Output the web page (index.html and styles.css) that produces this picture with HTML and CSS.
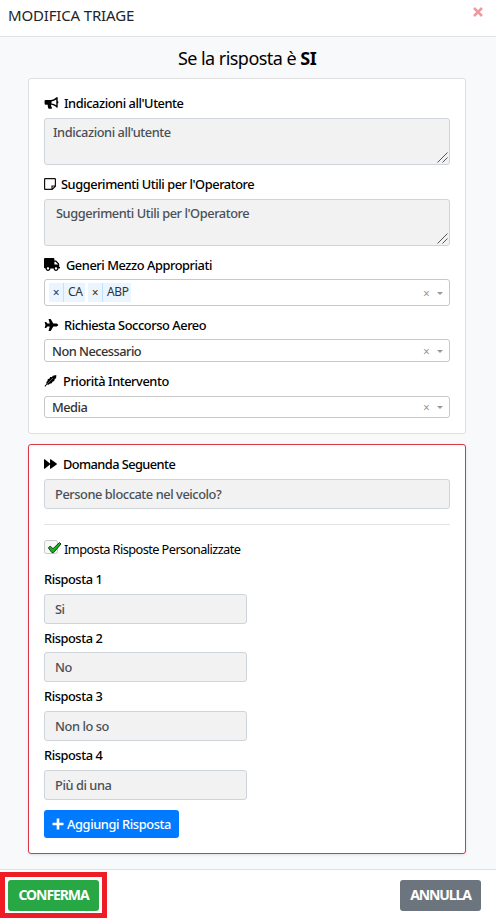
FILE: index.html
```html
<!DOCTYPE html>
<html lang="it">
<head>
<meta charset="utf-8">
<title>Modifica Triage</title>
<link rel="stylesheet" href="styles.css">
</head>
<body>
<div class="modal">
  <header class="modal-header">
    <h1 class="modal-title">MODIFICA TRIAGE</h1>
    <svg class="close" viewBox="0 0 10 10"><path d="M1 1l8 8M9 1l-8 8"/></svg>
  </header>
  <main class="modal-body">
    <h2 class="heading"><span>Se la risposta è</span> <b>SI</b></h2>
    <section class="card card-main">
      <div class="label first"><svg class="icon w15" viewBox="0 0 15 13"><path fill-rule="evenodd" d="M1 3.200h5.500C9 3.100 11 2 13 .3q1-.7 1.200.4v3.700q.8.300.8 1.300t-.8 1.300v4q-.2 1-1.200.4C11 9.700 9 8.700 7 8.500q-.2 1.700 1 3.100c.4.600-.1 1.200-.8 1.200H5.100q-.7 0-1-.6Q3.200 10.400 3.500 8.500H1.400Q0 8.400 0 7.100V4.400Q0 3.200 1 3.200zM7.500 4.800v2.200q2.800.3 5.200 1.900V2.700Q10.300 4.500 7.500 4.800z"/></svg><span>Indicazioni all'Utente</span></div>
      <div class="textarea"><span>Indicazioni all'utente</span><svg class="grip" viewBox="0 0 11 11"><path d="M.5 10.500L10.500.5M5.500 10.500l5-5"/></svg></div>
      <div class="label"><svg class="icon w12" viewBox="0 0 12 12"><path class="note" d="M1.300.6h9.400q.7 0 .7.700v6.900l-3.200 3.200H1.300q-.7 0-.7-.7V1.300q0-.7.7-.7zM11.400 8H8v3.400"/></svg><span>Suggerimenti Utili per l'Operatore</span></div>
      <div class="textarea inset"><span>Suggerimenti Utili per l'Operatore</span><svg class="grip" viewBox="0 0 11 11"><path d="M.5 10.500L10.500.5M5.500 10.500l5-5"/></svg></div>
      <div class="label short"><svg class="icon w16" viewBox="0 0 640 512"><path d="M624 352h-16V243.900c0-12.700-5.100-24.900-14.100-33.900L494 110.100c-9-9-21.200-14.100-33.900-14.100H416V48c0-26.500-21.500-48-48-48H48C21.500 0 0 21.500 0 48v320c0 26.500 21.500 48 48 48h16c0 53 43 96 96 96s96-43 96-96h128c0 53 43 96 96 96s96-43 96-96h48c8.800 0 16-7.200 16-16v-32c0-8.800-7.200-16-16-16zM160 464c-26.500 0-48-21.500-48-48s21.500-48 48-48 48 21.500 48 48-21.500 48-48 48zm320 0c-26.500 0-48-21.500-48-48s21.500-48 48-48 48 21.500 48 48-21.500 48-48 48zm80-208H416V144h44.100l99.900 99.900V256z"/></svg><span>Generi Mezzo Appropriati</span></div>
      <div class="select multi">
        <div class="tag"><i>×</i><span>CA</span></div><div class="tag tag-wide"><i>×</i><span>ABP</span></div>
        <span class="clear">×</span><span class="arrow"></span>
      </div>
      <div class="label short"><svg class="icon w15" viewBox="0 0 576 512"><path d="M480 192H365.710L260.610 8.060A16.014 16.014 0 0 0 246.710 0h-65.500c-10.630 0-18.300 10.170-15.380 20.390L214.860 192H112l-43.200-57.600c-3.020-4.030-7.770-6.400-12.800-6.400H16.010C5.600 128-2.040 137.780.490 147.880L32 256 .490 364.120C-2.040 374.220 5.600 384 16.010 384H56c5.040 0 9.780-2.370 12.800-6.400L112 320h102.860l-49.030 171.600c-2.920 10.220 4.750 20.400 15.380 20.400h65.500c5.740 0 11.040-3.080 13.890-8.060L365.710 320H480c35.350 0 96-28.650 96-64s-60.650-64-96-64z"/></svg><span>Richiesta Soccorso Aereo</span></div>
      <div class="select single"><span class="value">Non Necessario</span><span class="clear">×</span><span class="arrow"></span></div>
      <div class="label raised"><svg class="icon w13" viewBox="0 0 13 13"><path d="M12.800 0L12.600 3.300 11 4.600 10.600 6.500 8.700 7.200 7.800 9 5.600 9.500 4.500 10.500 2.700 10.300.8 12.800 0 12 2.200 9.600 2 7.500 3.200 6.500 3.600 4.200 5.300 4 6.100 2.200 8 2.100 9.200.8z"/><path class="cut" d="M3.300 9.300L9.200 3.200"/></svg><span>Priorità Intervento</span></div>
      <div class="select single last"><span class="value">Media</span><span class="clear">×</span><span class="arrow"></span></div>
    </section>
    <section class="card card-next">
      <div class="label next"><svg class="icon w13 forward" viewBox="0 0 13 10"><path d="M0 .6Q0 0 .7.200L6 4.400V.6Q6 0 6.700.200L12.700 4.600Q13 5 12.700 5.400L6.700 9.800Q6 10 6 9.400V5.600L.7 9.800Q0 10 0 9.400z"/></svg><span>Domanda Seguente</span></div>
      <div class="input full"><span>Persone bloccate nel veicolo?</span></div>
      <hr>
      <div class="check"><svg class="checkbox" viewBox="0 0 18 15"><rect x=".5" y=".5" width="13" height="13" rx="2"/><path d="M4.300 7.800L6.200 6.200 9 8.700 15.500 2.500 17 4 9.500 12.700H8z"/></svg><span>Imposta Risposte Personalizzate</span></div>
      <div class="label answer a1"><span>Risposta 1</span></div>
      <div class="input"><span>Si</span></div>
      <div class="label answer"><span>Risposta 2</span></div>
      <div class="input"><span>No</span></div>
      <div class="label answer tall"><span>Risposta 3</span></div>
      <div class="input"><span>Non lo so</span></div>
      <div class="label answer tall"><span>Risposta 4</span></div>
      <div class="input"><span>Più di una</span></div>
      <button class="btn add"><svg class="plus" viewBox="0 0 12 12"><path d="M6 .5v11M.5 6h11"/></svg><span>Aggiungi Risposta</span></button>
    </section>
  </main>
  <footer class="modal-footer">
    <div class="highlight"><button class="btn confirm"><span>CONFERMA</span></button></div>
    <button class="btn cancel"><span>ANNULLA</span></button>
  </footer>
</div>
</body>
</html>
```
FILE: styles.css
```css
* { box-sizing: border-box; }
body { margin: 0; background: #fff; color: #000; font: 500 12.8px/18px "Noto Sans", sans-serif; letter-spacing: -.43px; overflow: hidden; }
.modal { width: 496px; height: 919px; }
.modal-header { height: 37px; padding: 5px 13px 0 8px; display: flex; justify-content: space-between; border-bottom: 1px solid #dee2e6; }
.modal-title { margin: 0; font-size: 15px; line-height: 20px; font-weight: 400; color: #212529; letter-spacing: -.16px; }
.close { width: 10px; height: 10px; margin-top: 2px; }
.close path { stroke: #ee99a2; stroke-width: 2.500; fill: none; }
.modal-body { height: 832px; padding: 0 30px 0 28px; background: #f8f9fa; }
.heading { height: 41px; margin: 0; padding-top: 9px; text-align: center; font-size: 18px; line-height: 24px; font-weight: 400; letter-spacing: -.54px; }
.heading b { font-weight: 700; }
.card { background: #fff; border: 1px solid #dfdfdf; border-radius: 3px; padding: 0 15px; }
.card-main { height: 356px; }
.card-next { height: 410px; margin-top: 10px; border-color: #dc3545; box-shadow: 0 1px 3px rgba(0,0,0,.1); }
.label { height: 34px; display: flex; align-items: center; padding-top: 4px; white-space: nowrap; }
.label.first { height: 39px; padding-top: 9px; }
.label.short { height: 33px; }
.label.raised { padding-top: 3px; }
.icon { flex: none; height: 12px; margin-right: 5px; fill: #000; }
.w15 { width: 15px; }
.w12 { width: 12px; }
.w16 { width: 16px; height: 13px; margin-right: 6px; }
.w13 { width: 13px; margin-right: 6px; }
.note { fill: none; stroke: #111; stroke-width: 1.200; }
.cut { fill: none; stroke: #fff; stroke-width: .4; }
.textarea { position: relative; height: 47px; padding: 4px 8px; border: 1px solid #ced4da; border-radius: 3px; background: #f2f2f2; color: #495057; }
.inset { padding-left: 11px; }
.grip { position: absolute; right: 1px; bottom: 1px; width: 11px; height: 11px; }
.grip path { fill: none; stroke: #555; stroke-width: 1; }
.select { display: flex; align-items: center; border: 1px solid #c8c8c8; border-radius: 3px; color: #333; padding: 0 6px 0 7px; }
.value { letter-spacing: -.52px; }
.multi { height: 27px; padding-left: 4px; }
.single { height: 23px; }
.single.last { height: 22px; }
.tag { display: flex; align-items: center; height: 19px; margin-right: 3px; width: 36px; background: #ebf5ff; font-size: 12px; font-weight: 400; letter-spacing: -.3px; }
.tag-wide { width: 43px; }
.tag i { width: 15px; height: 19px; line-height: 19px; border-right: 1px solid #c2e0ff; text-align: center; font-style: normal; }
.tag span { padding-left: 4px; margin-top: -1px; }
.clear { margin: 2px 0 0 auto; width: 7px; font-size: 12px; font-weight: 400; letter-spacing: 0; color: #999; }
.arrow { border: 3px solid transparent; border-top-color: #999; border-bottom: 0; margin: 1px 0 0 7px; }
.label.next { height: 34px; padding-top: 4px; letter-spacing: -.56px; }
.forward { height: 10px; }
.input { width: 203px; height: 30px; padding: 5px 10px; border: 1px solid #ced4da; border-radius: 3px; background: #f2f2f2; color: #495057; white-space: nowrap; }
.full { width: 100%; }
hr { height: 1px; margin: 15px 0; border: 0; background: #e3e3e3; }
.check { height: 19px; display: flex; font-weight: 400; letter-spacing: -.58px; }
.checkbox { width: 18px; height: 15px; margin-right: 2px; }
.checkbox rect { fill: #f8f8f8; stroke: #c8c8c8; }
.checkbox path { fill: #18b51b; stroke: #123f12; stroke-width: 1; }
.label.answer { height: 28px; padding: 0; }
.label.answer.a1 { height: 35px; padding-top: 5px; }
.label.answer.tall { height: 29px; padding-bottom: 1px; }
.btn { border: 0; border-radius: 3px; padding: 0; color: #fff; font: inherit; display: flex; align-items: center; justify-content: center; white-space: nowrap; }
.add { width: 135px; height: 28px; margin-top: 10px; background: #007bff; letter-spacing: -.38px; }
.plus { width: 12px; height: 12px; margin-right: 3px; }
.plus path { stroke: #fff; stroke-width: 2.600; }
.modal-footer { height: 50px; border-top: 1px solid #dee2e6; padding: 2px 15px 0 0; display: flex; justify-content: space-between; }
.highlight { width: 107px; height: 46px; border: 5px solid #ee1c25; padding: 3px; }
.confirm, .cancel { height: 31px; font-weight: 700; font-size: 14px; letter-spacing: -1.1px; }
.confirm span, .cancel span { margin-top: -1px; }
.confirm { width: 91px; background: #28a745; }
.cancel { width: 81px; background: #6c757d; margin-top: 8px; }
```
